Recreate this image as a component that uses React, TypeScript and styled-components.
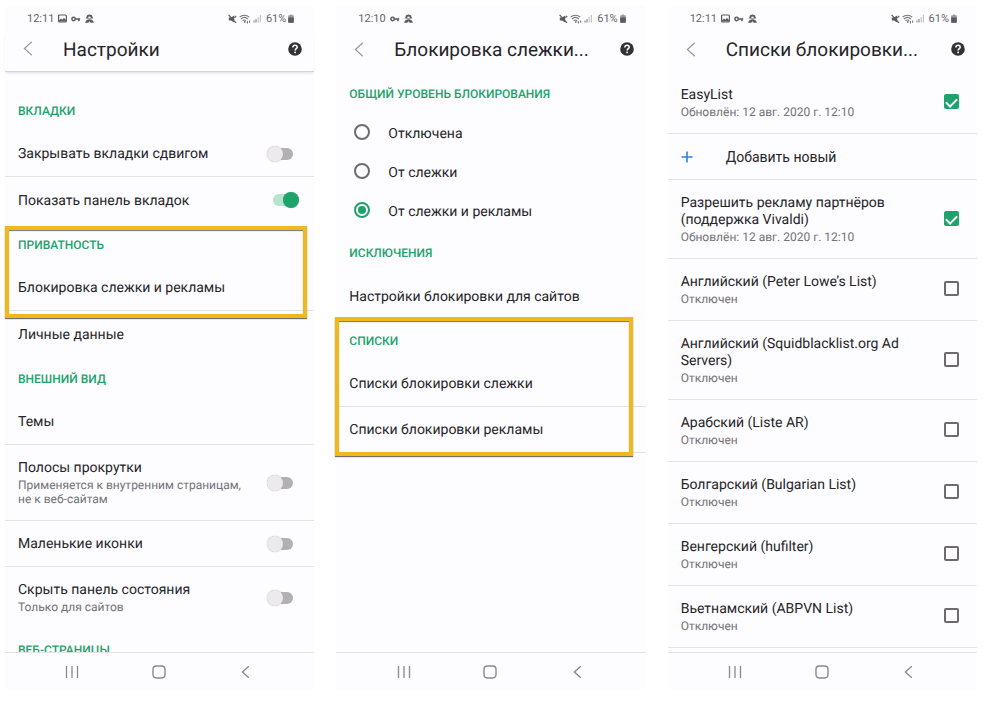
import React from "react";
import styled, { createGlobalStyle, css } from "styled-components";

const green = "#1ea36c";
const ink = "#26252a";
const muted = "#747278";
const line = "#e4e2e6";
const amber = "#efb81c";

const GlobalStyle = createGlobalStyle`
  * { box-sizing: border-box; }
  body { margin: 0; background: #fff; font-family: Roboto, "Liberation Sans", sans-serif; color: ${ink}; text-rendering: geometricPrecision; }
  button, input { font: inherit; color: inherit; margin: 0; }
`;

const Board = styled.main`
  display: grid;
  grid-template-columns: repeat(3, minmax(0, 1fr));
  gap: 22px;
  height: 100vh;
  padding: 5px 23px 12px 5px;
`;

const Phone = styled.section`
  display: flex;
  flex-direction: column;
  min-height: 0;
  background: #fdfcfe;
`;

const StatusBar = styled.div`
  display: flex;
  align-items: center;
  justify-content: space-between;
  height: 27px;
  padding: 0 20px 0 22px;
  font-size: 11px;
  line-height: 14px;
  color: #66646a;
`;

const StatusGroup = styled.div`
  display: flex;
  align-items: center;
  gap: 4px;
`;

const StatusPair = styled.div`
  display: flex;
  align-items: center;
  gap: 2px;
`;

const IconButton = styled.button`
  display: grid;
  place-items: center;
  flex: none;
  width: 16px;
  height: 24px;
  padding: 0;
  border: 0;
  background: none;
`;

const Header = styled.header<{ $raised?: boolean }>`
  display: flex;
  align-items: center;
  height: 40px;
  padding: 0 11px 4px 15px;

  ${IconButton} {
    margin-bottom: 2px;
  }
  ${(p) =>
    p.$raised &&
    css`
      border-bottom: 1px solid #d5d3d6;
      box-shadow: 0 2px 3px -1px #e0dee0;
    `}
`;

const Title = styled.h1`
  flex: 1;
  margin: 0;
  padding-left: 27px;
  font-size: 19px;
  font-weight: 400;
  line-height: 26px;
  white-space: nowrap;
`;

const Content = styled.div<{ $inset?: boolean }>`
  flex: 1;
  min-height: 0;
  overflow-x: visible;
  overflow-y: clip;
  padding-top: ${(p) => (p.$inset ? 17 : 0)}px;
`;

const Group = styled.div`
  position: relative;
`;

const GroupTitle = styled.h2`
  display: flex;
  align-items: center;
  height: 42px;
  margin: 0;
  padding: 1px 13px 0;
  font-size: 12px;
  font-weight: 500;
  line-height: 16px;
  color: ${green};
`;

const Marker = styled.div<{ $edges: string }>`
  position: absolute;
  inset: ${(p) => p.$edges};
  border: 4px solid ${amber};
  box-shadow: 0 1px 1px #77706a, inset 0 1px 1px #77706a;
  pointer-events: none;
`;

const rowBase = css<{ $last?: boolean }>`
  display: flex;
  align-items: center;
  gap: 12px;
  width: 100%;
  min-height: 46px;
  padding: 13px 18px 13px 13px;
  border: 0;
  border-bottom: ${(p) => (p.$last ? 0 : 1)}px solid ${line};
  background: none;
  font-size: 14px;
  line-height: 17px;
  text-align: left;
  text-decoration: none;
  color: ${ink};
`;

const LinkRow = styled.a<{ $last?: boolean }>`${rowBase}`;
const LabelRow = styled.label<{ $last?: boolean }>`${rowBase}`;
const AddRow = styled.button`
  ${rowBase}
  gap: 33px;
`;

const RowText = styled.span`
  display: flex;
  flex-direction: column;
  gap: 1px;
  flex: 1;
  padding-top: 2px;
`;

const Note = styled.span`
  padding-bottom: 1px;
  font-size: 12px;
  line-height: 14px;
  color: ${muted};
`;

const Switch = styled.input`
  appearance: none;
  flex: none;
  display: grid;
  align-items: center;
  width: 26px;
  height: 16px;
  margin-right: 3px;

  &::before,
  &::after {
    content: "";
    grid-area: 1 / 1;
  }
  &::before {
    height: 12px;
    margin-left: 4px;
    border-radius: 6px;
    background: #b2b0b3;
  }
  &::after {
    width: 16px;
    height: 16px;
    border-radius: 50%;
    background: #eceaec;
    box-shadow: 0 0 1px #aaa8ac;
  }
  &:checked {
    margin-right: -3px;
  }
  &:checked::before {
    margin: 0 4px 0 0;
    background: #b5e5cf;
  }
  &:checked::after {
    justify-self: end;
    background: ${green};
  }
`;

const Checkbox = styled.input`
  appearance: none;
  flex: none;
  display: grid;
  justify-items: center;
  align-items: start;
  width: 15px;
  height: 15px;
  margin-bottom: 2px;
  border: 2px solid #6d6b70;
  border-radius: 2px;

  &:checked {
    border-color: ${green};
    background: ${green};
  }
  &:checked::after {
    content: "";
    width: 5px;
    height: 9px;
    border: solid #fff;
    border-width: 0 2px 2px 0;
    transform: rotate(45deg);
  }
`;

const RadioList = styled.div`
  display: flex;
  flex-direction: column;
`;

const RadioRow = styled.label`
  display: flex;
  align-items: center;
  gap: 18px;
  height: 39px;
  padding: 1px 0 0 18px;
  font-size: 14px;
  line-height: 17px;
`;

const Radio = styled.input`
  appearance: none;
  display: grid;
  place-items: center;
  width: 16px;
  height: 16px;
  border: 2px solid #6d6b70;
  border-radius: 50%;

  ${RadioRow} & {
    margin-bottom: 4px;
  }
  &:checked {
    border-color: ${green};
  }
  &:checked::after {
    content: "";
    width: 8px;
    height: 8px;
    border-radius: 50%;
    background: ${green};
  }
`;

const NavBar = styled.nav`
  flex: none;
  display: grid;
  grid-template-columns: repeat(3, 1fr);
  align-items: center;
  justify-items: center;
  height: 38px;
  padding: 0 25px 0 24px;
  border-top: 1px solid ${line};
`;

const PictureIcon = () => (
  <svg width="9" height="9" viewBox="0 0 9 9" aria-hidden="true">
    <rect x="0.6" y="1" width="7.8" height="7" rx="1" fill="none" stroke="#5c5a60" strokeWidth="1.2" />
    <path d="M1 7.5V6.4L3 4.4L4.4 5.8L6 3.8L8 6.2V7.5Z" fill="#5c5a60" />
  </svg>
);

const KeyIcon = () => (
  <svg width="10" height="8" viewBox="0 0 10 8" aria-hidden="true">
    <circle cx="2.6" cy="4" r="1.7" fill="none" stroke="#5c5a60" strokeWidth="1.5" />
    <path d="M4.3 4H9.2M7.9 4V6.2" fill="none" stroke="#5c5a60" strokeWidth="1.5" />
  </svg>
);

const AgentIcon = () => (
  <svg width="9" height="9" viewBox="0 0 9 9" aria-hidden="true">
    <path d="M0.6 4.6C1.2 4 1.4 3.4 1.5 2.8C1.7 1.2 3 0.4 4.5 0.4S7.3 1.2 7.5 2.8C7.6 3.4 7.8 4 8.4 4.6Z" fill="#5c5a60" />
    <ellipse cx="4.5" cy="3.2" rx="1.4" ry="0.7" fill="#fdfcfe" />
    <path d="M0.2 8.7C0.6 6.4 2 5.2 4.5 5.2S8.4 6.4 8.8 8.7Z" fill="#5c5a60" />
    <path d="M3.1 8.7L4.5 7.3L5.9 8.7Z" fill="#fdfcfe" />
  </svg>
);

const MuteIcon = () => (
  <svg width="9" height="10" viewBox="0 0 9 10" aria-hidden="true">
    <path d="M0.8 3.4H3L6.2 1.4V8.6L3 6.6H0.8Z" fill="#5c5a60" />
    <path d="M0.6 0.9L8 8.9" stroke="#5c5a60" strokeWidth="1.3" />
    <path d="M6.4 3.8L8.2 1.8" stroke="#5c5a60" strokeWidth="1.2" />
  </svg>
);

const WifiIcon = () => (
  <svg width="12" height="10" viewBox="0 0 12 10" aria-hidden="true">
    <path d="M0.6 3.2C3.4 0.6 7.4 0.6 10.2 3.2M2 5C4 3.1 6.8 3.1 8.8 5M3.6 6.7C4.8 5.7 6 5.7 7.2 6.7" fill="none" stroke="#77757b" strokeWidth="1.1" />
    <circle cx="5.8" cy="8" r="0.9" fill="#77757b" />
    <path d="M8.4 7V9.4M10.6 6.4V8.8" stroke="#77757b" strokeWidth="1.1" />
  </svg>
);

const SignalIcon = () => (
  <svg width="9" height="9" viewBox="0 0 9 9" aria-hidden="true">
    <path d="M1 6.5V8.5M3 5V8.5" stroke="#8c8a90" strokeWidth="1.2" />
    <path d="M5.2 3V8.5M7.4 1V8.5" stroke="#c6c4c8" strokeWidth="1.2" />
  </svg>
);

const BatteryIcon = () => (
  <svg width="6" height="9" viewBox="0 0 6 9" aria-hidden="true">
    <path d="M2 0.4H4V1.2H5.2Q5.8 1.2 5.8 1.9V8Q5.8 8.7 5.2 8.7H0.8Q0.2 8.7 0.2 8V1.9Q0.2 1.2 0.8 1.2H2Z" fill="#9b999e" />
    <path d="M0.2 3.4H5.8V8Q5.8 8.7 5.2 8.7H0.8Q0.2 8.7 0.2 8Z" fill="#5c5a60" />
  </svg>
);

const BackIcon = () => (
  <svg width="10" height="15" viewBox="0 0 10 15" aria-hidden="true">
    <path d="M8.8 0.8L1.4 7.5L8.8 14.2" fill="none" stroke="#99979c" strokeWidth="1.2" />
  </svg>
);

const HelpIcon = () => (
  <svg width="14" height="14" viewBox="0 0 14 14" aria-hidden="true">
    <circle cx="7" cy="7" r="6.8" fill="#333136" />
    <path d="M4.9 5.4C4.9 4 5.8 3.2 7 3.2S9.2 4 9.2 5.2C9.2 6.6 7.1 6.7 7.1 8.6" fill="none" stroke="#fff" strokeWidth="1.5" />
    <rect x="6.3" y="9.6" width="1.6" height="1.6" fill="#fff" />
  </svg>
);

const PlusIcon = () => (
  <svg width="12" height="12" viewBox="0 0 12 12" aria-hidden="true">
    <path d="M6 0.5V11.5M0.5 6H11.5" stroke="#2f80e0" strokeWidth="1.6" />
  </svg>
);

const RecentsIcon = () => (
  <svg width="14" height="14" viewBox="0 0 14 14" aria-hidden="true">
    <path d="M1.5 1V13M7 1V13M12.5 1V13" stroke="#8b898e" strokeWidth="1.3" />
  </svg>
);

const HomeIcon = () => (
  <svg width="14" height="14" viewBox="0 0 14 14" aria-hidden="true">
    <rect x="1" y="1" width="12" height="12" rx="3.4" fill="none" stroke="#8b898e" strokeWidth="1.4" />
  </svg>
);

const NavBackIcon = () => (
  <svg width="9" height="14" viewBox="0 0 9 14" aria-hidden="true">
    <path d="M7.8 1.2L1.4 7L7.8 12.8" fill="none" stroke="#8b898e" strokeWidth="1.4" />
  </svg>
);

type ScreenProps = {
  time: string;
  title: string;
  picture?: boolean;
  raised?: boolean;
  children: React.ReactNode;
};

const Screen = ({ time, title, picture, raised, children }: ScreenProps) => (
  <Phone>
    <StatusBar>
      <StatusGroup>
        <span>{time}</span>
        {picture && <PictureIcon />}
        <KeyIcon />
        <AgentIcon />
      </StatusGroup>
      <StatusGroup>
        <StatusPair>
          <MuteIcon />
          <WifiIcon />
          <SignalIcon />
        </StatusPair>
        <StatusPair>
          <span>61%</span>
          <BatteryIcon />
        </StatusPair>
      </StatusGroup>
    </StatusBar>
    <Header $raised={raised}>
      <IconButton type="button" aria-label="Назад"><BackIcon /></IconButton>
      <Title>{title}</Title>
      <IconButton type="button" aria-label="Справка"><HelpIcon /></IconButton>
    </Header>
    <Content $inset={raised}>{children}</Content>
    <NavBar>
      <IconButton type="button" aria-label="Недавние"><RecentsIcon /></IconButton>
      <IconButton type="button" aria-label="Домой"><HomeIcon /></IconButton>
      <IconButton type="button" aria-label="Назад"><NavBackIcon /></IconButton>
    </NavBar>
  </Phone>
);

type RowProps = { title: string; note?: string; on?: boolean; last?: boolean };

const NavRow = ({ title, href, last }: { title: string; href: string; last?: boolean }) => (
  <LinkRow href={href} $last={last}>
    <RowText>{title}</RowText>
  </LinkRow>
);

const SwitchRow = ({ title, note, on, last }: RowProps) => (
  <LabelRow $last={last}>
    <RowText>
      <span>{title}</span>
      {note && <Note>{note}</Note>}
    </RowText>
    <Switch type="checkbox" role="switch" defaultChecked={on} />
  </LabelRow>
);

const CheckRow = ({ title, note, on }: RowProps) => (
  <LabelRow>
    <RowText>
      <span>{title}</span>
      <Note>{note}</Note>
    </RowText>
    <Checkbox type="checkbox" defaultChecked={on} />
  </LabelRow>
);

const levels = ["Отключена", "От слежки", "От слежки и рекламы"];

const updated = "Обновлён: 12 авг. 2020 г. 12:10";

const lists: RowProps[] = [
  { title: "Разрешить рекламу партнёров (поддержка Vivaldi)", note: updated, on: true },
  { title: "Английский (Peter Lowe’s List)", note: "Отключен" },
  { title: "Английский (Squidblacklist.org Ad Servers)", note: "Отключен" },
  { title: "Арабский (Liste AR)", note: "Отключен" },
  { title: "Болгарский (Bulgarian List)", note: "Отключен" },
  { title: "Венгерский (hufilter)", note: "Отключен" },
  { title: "Вьетнамский (ABPVN List)", note: "Отключен" },
];

export default function App() {
  return (
    <>
      <GlobalStyle />
      <Board>
        <Screen time="12:11" title="Настройки" picture raised>
          <Group>
            <GroupTitle>ВКЛАДКИ</GroupTitle>
            <SwitchRow title="Закрывать вкладки сдвигом" />
            <SwitchRow title="Показать панель вкладок" on last />
          </Group>
          <Group>
            <GroupTitle>ПРИВАТНОСТЬ</GroupTitle>
            <NavRow href="#blocking" title="Блокировка слежки и рекламы" />
            <NavRow href="#privacy" title="Личные данные" last />
            <Marker $edges="3px 7px 39px 0" />
          </Group>
          <Group>
            <GroupTitle>ВНЕШНИЙ ВИД</GroupTitle>
            <NavRow href="#themes" title="Темы" />
            <SwitchRow title="Полосы прокрутки" note="Применяется к внутренним страницам, не к веб-сайтам" />
            <SwitchRow title="Маленькие иконки" />
            <SwitchRow title="Скрыть панель состояния" note="Только для сайтов" last />
          </Group>
          <Group>
            <GroupTitle>ВЕБ-СТРАНИЦЫ</GroupTitle>
          </Group>
        </Screen>

        <Screen time="12:10" title="Блокировка слежки...">
          <Group>
            <GroupTitle id="level">ОБЩИЙ УРОВЕНЬ БЛОКИРОВАНИЯ</GroupTitle>
            <RadioList role="radiogroup" aria-labelledby="level">
              {levels.map((name, i) => (
                <RadioRow key={name}>
                  <Radio type="radio" name="level" defaultChecked={i === 2} />
                  {name}
                </RadioRow>
              ))}
            </RadioList>
          </Group>
          <Group>
            <GroupTitle>ИСКЛЮЧЕНИЯ</GroupTitle>
            <NavRow href="#sites" title="Настройки блокировки для сайтов" last />
          </Group>
          <Group>
            <GroupTitle>СПИСКИ</GroupTitle>
            <NavRow href="#trackers" title="Списки блокировки слежки" />
            <NavRow href="#ads" title="Списки блокировки рекламы" />
            <Marker $edges="-2px 13px -3px -1px" />
          </Group>
        </Screen>

        <Screen time="12:11" title="Списки блокировки..." picture>
          <CheckRow title="EasyList" note={updated} on />
          <AddRow type="button">
            <PlusIcon />
            <RowText>Добавить новый</RowText>
          </AddRow>
          {lists.map((item) => (
            <CheckRow key={item.title} {...item} />
          ))}
        </Screen>
      </Board>
    </>
  );
}
